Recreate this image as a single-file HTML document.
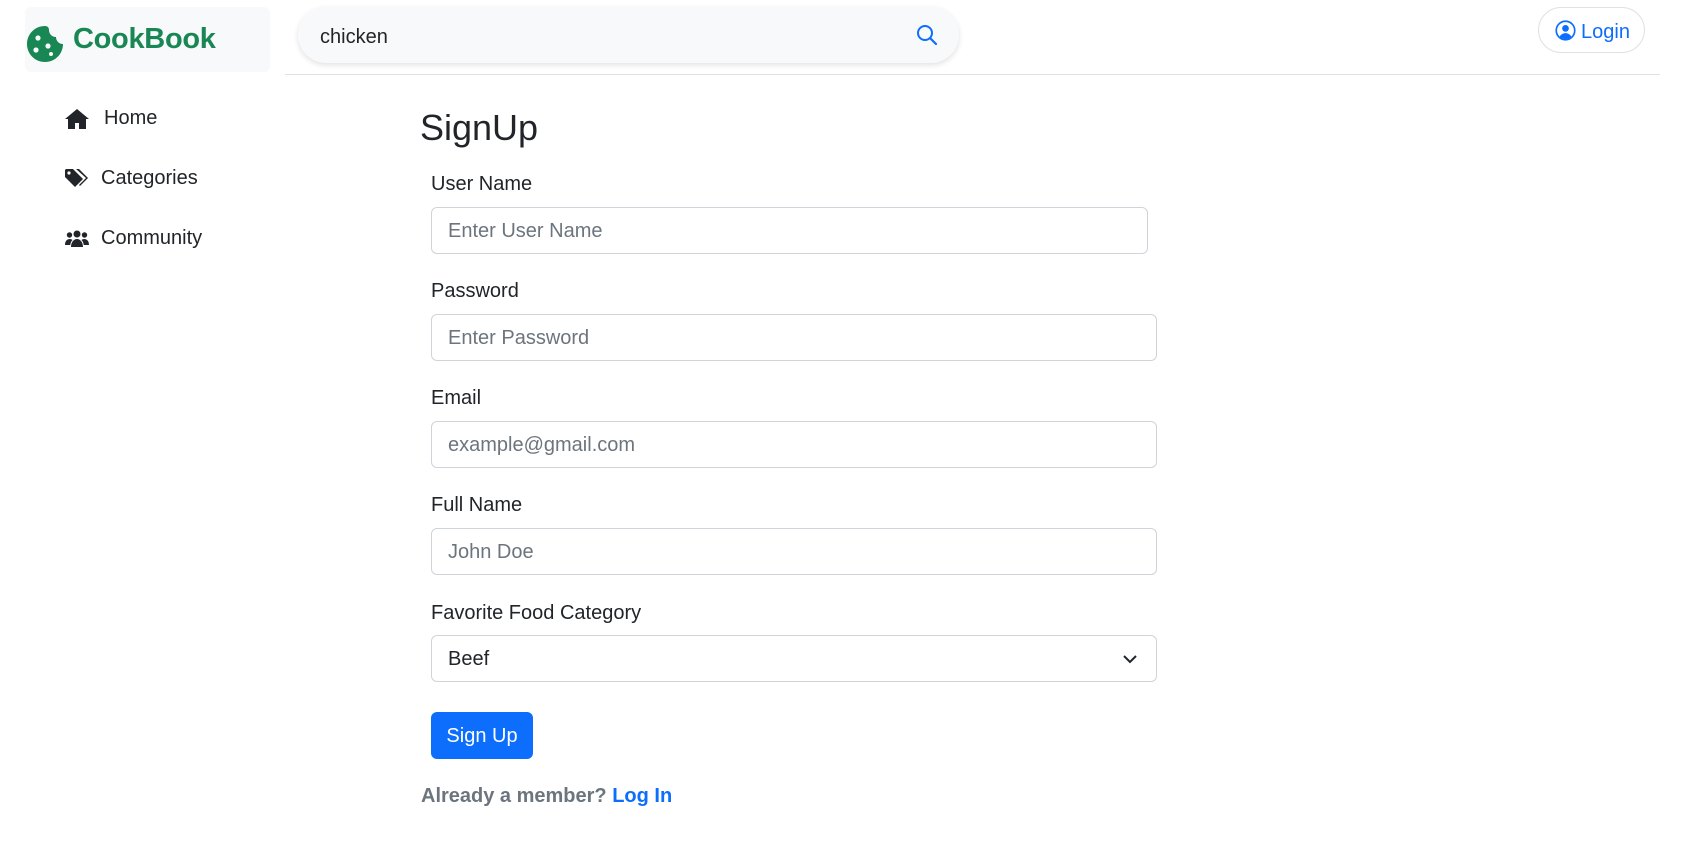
<!DOCTYPE html>
<html><head><meta charset="utf-8"><style>
*{box-sizing:border-box;margin:0;padding:0}
body{width:1682px;height:858px;background:#fff;font-family:"Liberation Sans",sans-serif;color:#212529;position:relative;overflow:hidden;font-size:20px}
.abs{position:absolute}
.logo{left:25px;top:7px;width:245px;height:65px;background:#f8f9fa;border-radius:6px}
.logo span{position:absolute;left:48px;top:16px;font-size:29px;font-weight:bold;color:#198754;letter-spacing:-0.3px}
.search{left:298px;top:7px;width:661px;height:56px;background:#f8f9fa;border-radius:28px;box-shadow:0 2px 6px rgba(0,0,0,.12)}
.search span{position:absolute;left:22px;top:19px;font-size:20px}
.hline{left:285px;top:74px;width:1375px;height:1px;background:#dee2e6}
.login{left:1538px;top:7px;width:107px;height:46px;border:1px solid #dee2e6;border-radius:23px;color:#0d6efd}
.nav{left:65px;font-size:20px;display:flex;align-items:center}
.lbl{left:431px;font-size:20px}
.inp{left:431px;height:47px;border:1px solid #ced4da;border-radius:6px;color:#6c757d;padding-left:16px;line-height:47px;font-size:20px}
</style></head><body>
<div class="abs logo">
<svg class="abs" style="left:1px;top:18px" width="38" height="38" viewBox="0 0 38 38"><path d="M19 1C9 1 1 9 1 19s8 18 18 18 18-8 18-18c-4 0-7-3-7-7-4 0-7-3-7-7 0-2-1-4-4-4z" fill="#198754"/><circle cx="12" cy="13" r="2.6" fill="#f8f9fa"/><circle cx="10" cy="25" r="2.6" fill="#f8f9fa"/><circle cx="22" cy="21" r="2.6" fill="#f8f9fa"/><circle cx="25" cy="29" r="2" fill="#f8f9fa"/></svg>
<span>CookBook</span></div>
<div class="abs search"><span>chicken</span>
<svg class="abs" style="left:618px;top:17px" width="22" height="22" viewBox="0 0 22 22"><circle cx="9" cy="9" r="7" fill="none" stroke="#0d6efd" stroke-width="2"/><path d="M14 14l6 6" stroke="#0d6efd" stroke-width="2.2" stroke-linecap="round"/></svg></div>
<div class="abs hline"></div>
<div class="abs login">
<svg class="abs" style="left:16px;top:12px" width="21" height="21" viewBox="0 0 20 20"><circle cx="10" cy="10" r="8.8" fill="none" stroke="#0d6efd" stroke-width="1.6"/><circle cx="10" cy="8" r="3.2" fill="#0d6efd"/><path d="M4.3 16c1.5-2.5 3.5-3.5 5.7-3.5s4.2 1 5.7 3.5A8.5 8.5 0 0 1 4.3 16z" fill="#0d6efd"/></svg>
<span class="abs" style="left:42px;top:13px">Login</span></div>
<div class="abs nav" style="top:107px">
<svg width="24" height="22" viewBox="0 0 24 22"><path d="M12 1L0 11h3v10h7v-6h4v6h7V11h3z" fill="#212529"/></svg><span style="margin-left:15px">Home</span></div>
<div class="abs nav" style="top:167px">
<svg width="24" height="22" viewBox="0 0 24 22"><path d="M0 2v7l10 10 8-8L8 1H1z" fill="#212529"/><circle cx="4" cy="5" r="1.6" fill="#fff"/><path d="M11 1h3l9 9-8 8-1-1 7-7z" fill="#212529"/></svg><span style="margin-left:12px">Categories</span></div>
<div class="abs nav" style="top:227px">
<svg width="24" height="20" viewBox="0 0 24 20"><circle cx="12" cy="5" r="3.5" fill="#212529"/><circle cx="4.5" cy="6" r="2.7" fill="#212529"/><circle cx="19.5" cy="6" r="2.7" fill="#212529"/><path d="M6 18c0-5 3-8 6-8s6 3 6 8z M0 16c0-4 2-6 5-6 1 0 2 .5 2.5 1C6 12.5 5.5 14 5.3 16z M24 16c0-4-2-6-5-6-1 0-2 .5-2.5 1 1.5 1.5 2 3 2.2 5z" fill="#212529"/></svg><span style="margin-left:12px">Community</span></div>
<div class="abs" style="left:420px;top:107px;font-size:36px;font-weight:500">SignUp</div>
<div class="abs lbl" style="top:173px">User Name</div>
<div class="abs inp" style="top:207px;width:717px">Enter User Name</div>
<div class="abs lbl" style="top:280px">Password</div>
<div class="abs inp" style="top:314px;width:726px">Enter Password</div>
<div class="abs lbl" style="top:387px">Email</div>
<div class="abs inp" style="top:421px;width:726px">example@gmail.com</div>
<div class="abs lbl" style="top:494px">Full Name</div>
<div class="abs inp" style="top:528px;width:726px">John Doe</div>
<div class="abs lbl" style="top:602px">Favorite Food Category</div>
<div class="abs inp" style="top:635px;width:726px;color:#212529">Beef
<svg class="abs" style="right:18px;top:17px" width="16" height="12" viewBox="0 0 16 12"><path d="M2 3l6 6 6-6" fill="none" stroke="#212529" stroke-width="2"/></svg></div>
<div class="abs" style="left:431px;top:712px;width:102px;height:47px;background:#0d6efd;border-radius:6px;color:#fff;text-align:center;line-height:49px">Sign Up</div>
<div class="abs" style="left:421px;top:785px;font-weight:bold;color:#6c757d">Already a member? <span style="color:#0d6efd">Log In</span></div>
</body></html>
